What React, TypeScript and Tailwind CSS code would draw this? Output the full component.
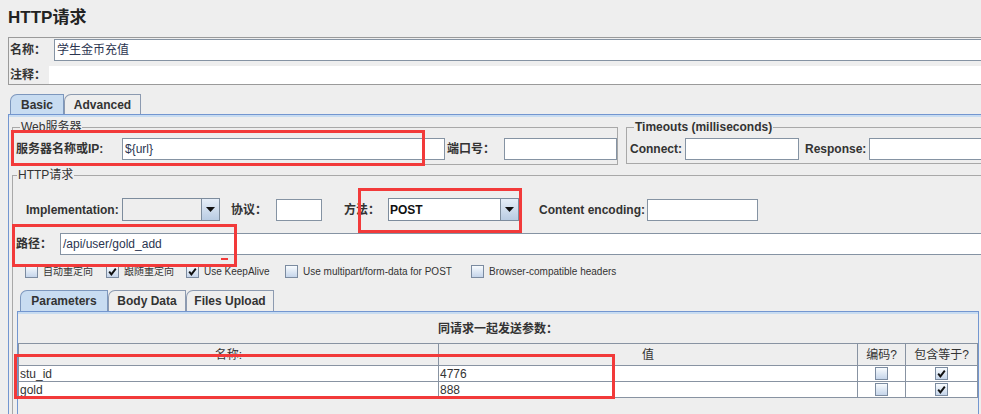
import React from "react";

const Check = ({ checked = false }: { checked?: boolean }) => (
  <span className="w-[13px] h-[13px] border border-[#7b8ba0] bg-gradient-to-b from-[#f8fbfe] to-[#c5d5ea] flex items-center justify-center shrink-0">
    {checked && (
      <svg width="9" height="9" viewBox="0 0 9 9">
        <path d="M1.2 4.6 L3.4 7.4 L7.8 1.6" stroke="#111" strokeWidth="1.9" fill="none" />
      </svg>
    )}
  </span>
);

const Arrow = () => (
  <span className="w-[18px] h-full border-l border-[#7d8c9d] bg-gradient-to-b from-[#e6eef8] to-[#b9cce3] flex items-center justify-center shrink-0">
    <svg width="9" height="5" viewBox="0 0 9 5">
      <polygon points="0,0 9,0 4.5,5" fill="#111" />
    </svg>
  </span>
);

const Tab = ({ label, active = false, className = "" }: { label: string; active?: boolean; className?: string }) => (
  <div
    className={`h-full flex items-center justify-center border border-b-0 rounded-tl-[7px] text-[12px] font-bold text-[#333] ${
      active ? "bg-[#c8dcf1] border-[#7d97bd]" : "bg-[#eeeeee] border-[#8c9ab0]"
    } ${className}`}
  >
    {label}
  </div>
);

const Field = ({ className = "", children }: { className?: string; children?: React.ReactNode }) => (
  <div className={`h-[22px] bg-white border border-[#8593a3] flex items-center pl-[2px] text-[12px] text-[#2b3550] ${className}`}>
    {children}
  </div>
);

const Label = ({ className = "", children }: { className?: string; children: React.ReactNode }) => (
  <span className={`text-[12px] font-bold text-[#333] shrink-0 ${className}`}>{children}</span>
);

export default function App() {
  return (
    <div className="relative w-[981px] h-[414px] overflow-hidden bg-[#eeeeee] font-['Liberation_Sans','Noto_Sans_CJK_SC',sans-serif]">
      <div className="w-[1010px]">
        <div className="h-[37px] pl-[8px] pt-[8px] text-[17px] leading-[20px] font-bold text-[#222]">HTTP请求</div>

        {/* name / comment */}
        <div className="ml-[8px] h-[48px] border border-[#9a9a9a] flex flex-col">
          <div className="h-[23px] pt-[1px] flex items-start">
            <Label className="w-[45px] pl-[1px] leading-[22px]">名称：</Label>
            <Field className="flex-1">学生金币充值</Field>
          </div>
          <div className="h-[23px] pt-[5px] flex items-start">
            <Label className="w-[40px] pl-[1px] leading-[18px]">注释：</Label>
            <div className="flex-1 h-[18px] bg-white" />
          </div>
        </div>

        {/* Basic / Advanced tabs */}
        <div className="mt-[9px] h-[20px] pl-[10px] flex">
          <Tab label="Basic" active className="w-[54px]" />
          <Tab label="Advanced" className="w-[77px]" />
        </div>

        <div className="ml-[8px] h-[300px] border-t border-l border-[#7396d0]">
          <div className="h-[2px] bg-[#c8dcf1]" />

          {/* web server + timeouts */}
          <div className="mt-[3px] pl-[3px] flex items-start">
            <fieldset className="w-[609px] border border-[#a8a8a8] pb-[4px] pl-[3px]">
              <legend className="ml-[4px] px-[1px] text-[12px] leading-[14px] text-[#333]">Web服务器</legend>
              <div className="mt-[4px] flex items-center">
                <Label className="w-[106px]">服务器名称或IP:</Label>
                <Field className="w-[323px]">{"${url}"}</Field>
                <Label className="ml-[2px] w-[57px]">端口号：</Label>
                <Field className="w-[113px]" />
              </div>
            </fieldset>
            <fieldset className="ml-[8px] w-[400px] border border-[#a8a8a8] pb-[3px] pl-[3px]">
              <legend className="ml-[4px] px-[1px] text-[12px] leading-[14px] font-bold text-[#333]">Timeouts (milliseconds)</legend>
              <div className="mt-[4px] flex items-center">
                <Label className="w-[55px]">Connect:</Label>
                <Field className="w-[114px]" />
                <Label className="ml-[6px] w-[64px]">Response:</Label>
                <Field className="w-[130px]" />
              </div>
            </fieldset>
          </div>

          {/* HTTP request */}
          <div className="mt-[3px] pl-[3px]">
            <fieldset className="w-[990px] h-[260px] border border-[#a8a8a8]">
              <legend className="ml-[4px] px-[1px] text-[12px] leading-[14px] text-[#333]">HTTP请求</legend>

              <div className="mt-[16px] h-[23px] pl-[13px] flex items-center">
                <Label className="w-[96px]">Implementation:</Label>
                <div className="w-[98px] h-[23px] border border-[#7d8c9d] flex">
                  <div className="flex-1 bg-[#eeeeee]" />
                  <Arrow />
                </div>
                <Label className="ml-[11px] w-[45px]">协议：</Label>
                <Field className="w-[46px]" />
                <Label className="ml-[22px] w-[44px]">方法：</Label>
                <div className="w-[131px] h-[23px] border border-[#7d8c9d] flex">
                  <div className="flex-1 bg-white flex items-center pl-[1px] text-[12px] font-bold text-[#111]">POST</div>
                  <Arrow />
                </div>
                <Label className="ml-[20px] w-[108px]">Content encoding:</Label>
                <Field className="w-[111px]" />
              </div>

              <div className="mt-[12px] h-[21px] pl-[3px] flex items-center">
                <Label className="w-[44px]">路径：</Label>
                <Field className="flex-1 h-[21px]">/api/user/gold_add</Field>
              </div>

              <div className="mt-[10px] h-[14px] pl-[12px] flex items-center text-[10px] text-[#333]">
                <div className="w-[81px] flex items-center gap-[5px]"><Check />自动重定向</div>
                <div className="w-[80px] flex items-center gap-[5px]"><Check checked />跟随重定向</div>
                <div className="w-[99px] flex items-center gap-[5px]"><Check checked />Use KeepAlive</div>
                <div className="w-[186px] flex items-center gap-[5px]"><Check />Use multipart/form-data for POST</div>
                <div className="flex items-center gap-[5px]"><Check />Browser-compatible headers</div>
              </div>

              {/* parameters tabs */}
              <div className="mt-[12px] h-[21px] pl-[7px] flex">
                <Tab label="Parameters" active className="w-[88px]" />
                <Tab label="Body Data" className="w-[78px]" />
                <Tab label="Files Upload" className="w-[88px]" />
              </div>
              <div className="ml-[4px] w-[962px] h-[120px] border-t border-l border-r border-[#7396d0]">
                <div className="h-[2px] bg-[#c8dcf1]" />
                <div className="h-[29px] flex items-center justify-center text-[12px] font-bold text-[#333]">同请求一起发送参数：</div>
                <div className="w-[960px] border-t border-l border-[#8893a2] text-[12px] text-[#333]">
                  <div className="h-[22px] flex border-b border-[#8893a2] bg-[#eeeeee]">
                    <div className="w-[420px] border-r border-[#8893a2] flex items-center justify-center">名称:</div>
                    <div className="w-[419px] border-r border-[#8893a2] flex items-center justify-center">值</div>
                    <div className="w-[48px] border-r border-[#8893a2] flex items-center justify-center">编码?</div>
                    <div className="w-[72px] border-r border-[#8893a2] flex items-center justify-center">包含等于?</div>
                  </div>
                  {[
                    ["stu_id", "4776"],
                    ["gold", "888"],
                  ].map(([k, v]) => (
                    <div key={k} className="h-[16px] flex border-b border-[#8893a2] bg-white">
                      <div className="w-[420px] border-r border-[#8893a2] flex items-center pl-[1px]">{k}</div>
                      <div className="w-[419px] border-r border-[#8893a2] flex items-center pl-[1px]">{v}</div>
                      <div className="w-[48px] border-r border-[#8893a2] flex items-center justify-center"><Check /></div>
                      <div className="w-[72px] border-r border-[#8893a2] flex items-center justify-center"><Check checked /></div>
                    </div>
                  ))}
                </div>
              </div>
            </fieldset>
          </div>
        </div>
      </div>

      {/* red annotation boxes */}
      <div className="absolute left-[11px] top-[130px] w-[414px] h-[36px] border-[3px] border-[#f23a3a]" />
      <div className="absolute left-[358px] top-[188px] w-[164px] h-[45px] border-[3px] border-[#f23a3a]" />
      <div className="absolute left-[12px] top-[224px] w-[225px] h-[43px] border-[3px] border-[#f23a3a]" />
      <div className="absolute left-[221px] top-[258px] w-[7px] h-[2px] bg-[#f23a3a]" />
      <div className="absolute left-[14px] top-[354px] w-[601px] h-[45px] border-[3px] border-[#f23a3a]" />
    </div>
  );
}
